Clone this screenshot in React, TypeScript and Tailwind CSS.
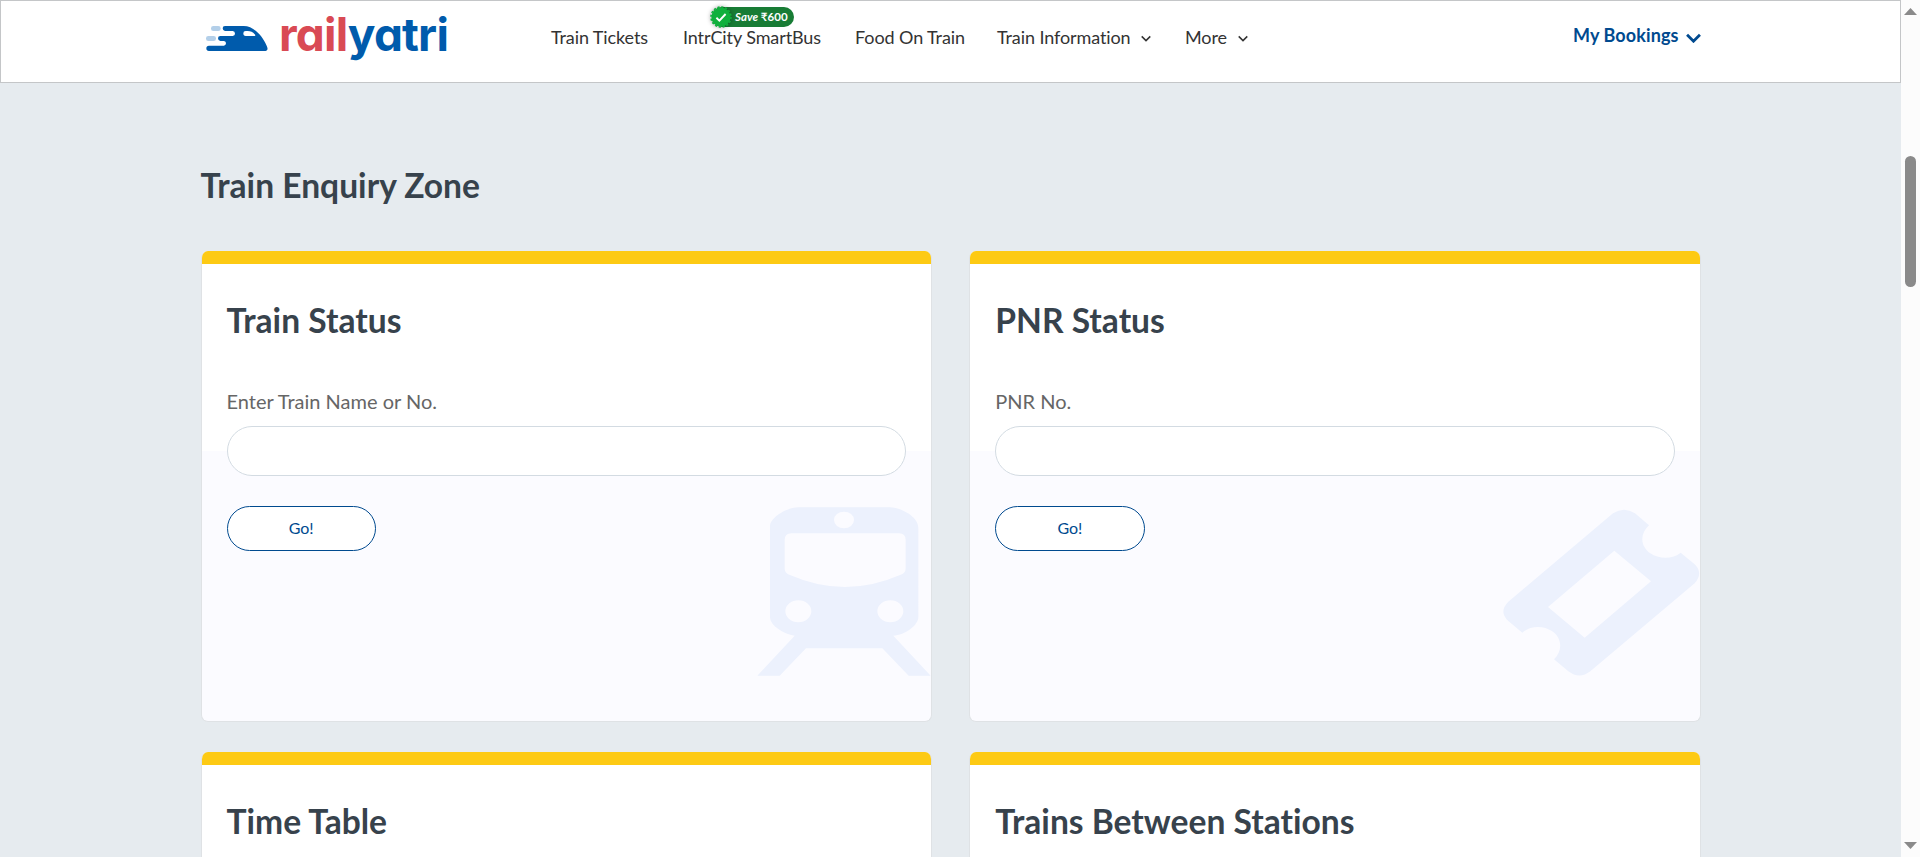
import type { ReactNode } from "react";

function TrainArt() {
  return (
    <svg className="absolute right-0 bottom-[45px] h-[169px] w-[174px]" viewBox="81 50 522 507" fill="#ecf1fd">
      <path
        fillRule="evenodd"
        d="M205 51H480C510 51 565 78 565 112V380C565 405 525 434 490 436L602 556H536L457 474H228L149 556H82L194 436C160 431 120 405 120 380V108C120 82 170 51 205 51ZM342 64A30 25 0 1 0 342 114A30 25 0 1 0 342 64ZM184 129Q164 129 164 149V234Q164 250 180 254Q345 326 510 254Q527 250 527 234V149Q527 129 507 129ZM205 330A39 33 0 1 0 205 396A39 33 0 1 0 205 330ZM481 330A39 33 0 1 0 481 396A39 33 0 1 0 481 330Z"
      />
    </svg>
  );
}

function TicketArt() {
  return (
    <svg className="absolute right-0 bottom-[45px] h-[167px] w-[197px]" viewBox="70 57 591 501" fill="#ecf1fd">
      <path
        fillRule="evenodd"
        d="M400 70Q433 48 466 70L508 106C480 132 481 168 512 190C538 208 580 208 603 188L645 223Q672 250 645 280L332 544Q299 569 266 544L223 508C249 482 248 446 218 424C190 405 150 407 128 428L86 393Q56 365 86 335ZM404 182L205 351L315 443L514 274Z"
      />
    </svg>
  );
}

function Logo() {
  return (
    <a className="flex h-[60px] w-[250px] items-start" aria-label="railyatri">
      <svg className="mt-[24px] h-[27px] w-[63px] shrink-0" viewBox="0 0 189 81">
        <g fill="#b3cfe9">
          <rect x="15" y="3" width="29" height="15" rx="7" />
          <rect x="0" y="33" width="30" height="15" rx="7" />
        </g>
        <path
          fill="#005bac"
          fillRule="evenodd"
          d="M57 3H113C143 3 169 32 182 62Q190 78 174 78H9Q1 78 1 70Q1 62 9 62H54Q60 61 60 55Q60 49 54 48H43Q36 47 36 40Q36 33 43 33H80Q87 32 87 26Q87 19 80 18H57Q50 17 50 10Q50 3 57 3ZM119 18Q112 18 112 25Q112 33 119 33H146Q150 32 146 28Q138 18 125 18Z"
        />
      </svg>
      <span className="mt-[5px] ml-[10px] font-[Inter,sans-serif] text-[46px] leading-[56px] font-bold tracking-[-0.8px] whitespace-nowrap text-[#005bac] [font-feature-settings:'cv11']">
        <span className="text-[#d94a54]">rail</span>yatri
      </span>
    </a>
  );
}

function Chevron({ className, width }: { className: string; width: number }) {
  return (
    <svg className={className} viewBox="0 0 14 9" fill="none" stroke="currentColor" strokeWidth={width}>
      <path d="M1 1.5L7 7.5L13 1.5" />
    </svg>
  );
}

function SaveBadge() {
  return (
    <span className="absolute top-[-17px] left-[29px] flex h-5 w-[82px] items-center rounded-full bg-[#187c35]">
      <svg className="absolute -left-[2px] -top-[1px] h-[22px] w-[22px] drop-shadow-[0_0_2px_rgba(0,0,0,0.35)]" viewBox="-11 -11 22 22">
        <circle r="9.6" fill="#10b03c" />
        <circle r="10" fill="none" stroke="#10b03c" strokeWidth="1.6" strokeDasharray="2.2 1.72" />
        <path d="M-4.6 0.8L-1.6 3.6L4.6 -3" fill="none" stroke="#fff" strokeWidth="1.9" />
      </svg>
      <span className="ml-[23px] text-[11.5px] leading-5 font-bold tracking-[0.05px] whitespace-nowrap text-white italic">
        Save <span className="not-italic">₹600</span>
      </span>
    </span>
  );
}

function Header() {
  return (
    <header className="flex h-[83px] shrink-0 border border-[#c4c6c8] bg-white pl-[205px]">
      <Logo />
      <nav className="ml-[95px] flex items-start pt-[23px] text-[18px] leading-[26px] tracking-[-0.1px] whitespace-nowrap text-[#333]">
        <a className="w-[132px]">Train Tickets</a>
        <a className="relative w-[172px]">
          IntrCity SmartBus
          <SaveBadge />
        </a>
        <a className="w-[142px]">Food On Train</a>
        <a className="flex w-[188px] items-center justify-between pr-[34px]">
          Train Information
          <Chevron className="mt-[2px] h-[7px] w-[10px]" width={2.1} />
        </a>
        <a className="flex w-[63px] items-center justify-between">
          More
          <Chevron className="mt-[2px] h-[7px] w-[10px]" width={2.1} />
        </a>
      </nav>
      <a className="mt-[21px] ml-[325px] flex h-[26px] w-[128px] items-center justify-between text-[18px] font-bold tracking-[0.1px] whitespace-nowrap text-[#004a8f]">
        My Bookings
        <Chevron className="mt-[5px] h-[10px] w-[15px]" width={2.6} />
      </a>
    </header>
  );
}

function Card({ title, label, art }: { title: string; label?: string; art?: ReactNode }) {
  return (
    <section className="relative flex h-[471px] flex-col overflow-hidden rounded-[7px] border border-t-0 border-[#dfe2e5] bg-white bg-[linear-gradient(to_bottom,#fff_200px,#fbfbff_200px)] px-[25px]">
      <div className="-mx-[26px] h-[13px] shrink-0 bg-[#fdca14]" />
      {art}
      <h2 className="mt-[35px] text-[33.6px] leading-[42px] font-bold text-[#37424c]">{title}</h2>
      {label && (
        <form className="relative mt-[45px] flex flex-col items-start">
          <label className="text-[20px] leading-[30px] text-[#666]">{label}</label>
          <input className="mt-[10px] h-[50px] w-full rounded-full border border-[#d3dbe2] bg-white px-5" />
          <button type="button" className="mt-[30px] h-[45px] w-[149.4px] rounded-full border border-[#004a8f] bg-white pb-px text-[16px] text-[#004a8f]">
            Go!
          </button>
        </form>
      )}
    </section>
  );
}

export default function App() {
  return (
    <div className="flex h-[857px] w-[1920px] overflow-hidden bg-[#e6ebef] font-[Lato,sans-serif] [font-variant-ligatures:none]">
      <div className="flex w-[1901px] flex-col">
        <Header />
        <main className="pt-[80px] pl-[200.5px]">
          <h1 className="text-[33.6px] leading-[44px] font-bold text-[#37424c]">Train Enquiry Zone</h1>
          <div className="mt-[44px] grid grid-cols-[731.25px_731.25px] gap-x-[37.5px] gap-y-[30px]">
            <Card title="Train Status" label="Enter Train Name or No." art={<TrainArt />} />
            <Card title="PNR Status" label="PNR No." art={<TicketArt />} />
            <Card title="Time Table" />
            <Card title="Trains Between Stations" />
          </div>
        </main>
      </div>
      <div className="flex w-[19px] flex-col items-center bg-[#fcfcfc] pt-2">
        <svg className="h-[7px] w-[13px]" viewBox="0 0 13 7" fill="#8a8a8a">
          <path d="M6.5 0L13 7H0Z" />
        </svg>
        <div className="mt-[141px] h-[131px] w-[11px] rounded-full bg-[#8a8a8a]" />
        <svg className="mt-auto mb-2 h-[7px] w-[13px]" viewBox="0 0 13 7" fill="#8a8a8a">
          <path d="M0 0H13L6.5 7Z" />
        </svg>
      </div>
    </div>
  );
}
